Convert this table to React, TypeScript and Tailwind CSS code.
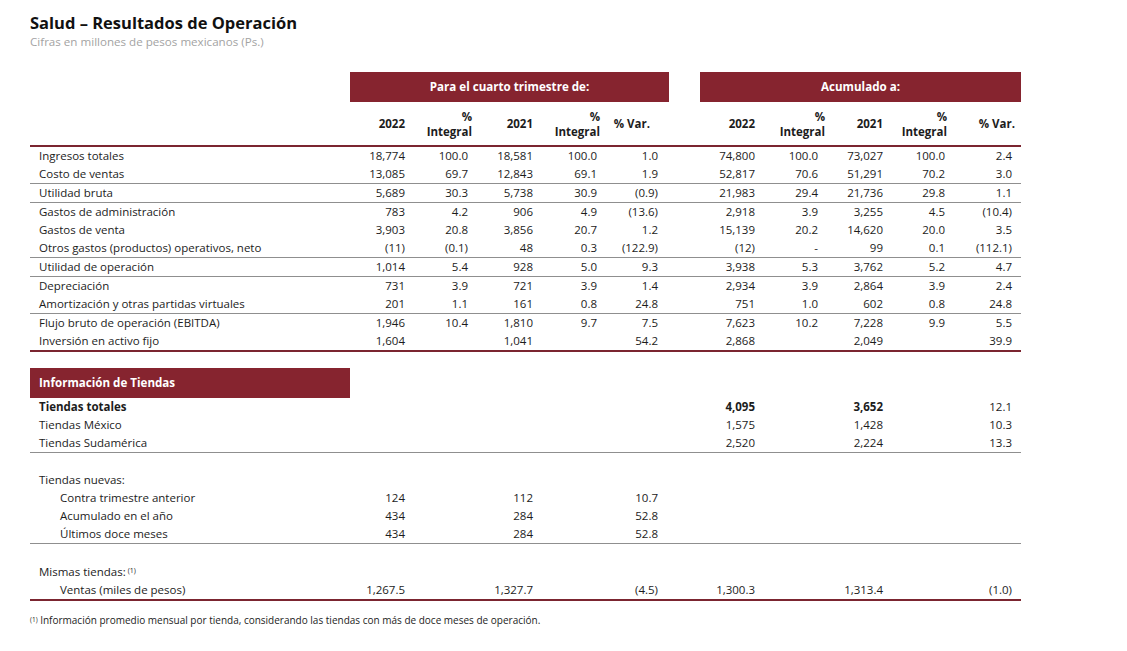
import React from "react";

const GRID =
  "grid grid-cols-[320px_55px_63px_65px_64px_61px_42px_55px_63px_65px_62px_67px_9px]";

type V = string | undefined;

function Row({
  label,
  vals,
  bold,
  boldIdx = [],
  indent,
}: {
  label: React.ReactNode;
  vals: V[];
  bold?: boolean;
  boldIdx?: number[];
  indent?: boolean;
}) {
  const v = [...vals];
  while (v.length < 10) v.push(undefined);
  const cell = (x: V, i: number) => (
    <div key={i} className={`text-right whitespace-nowrap ${boldIdx.includes(i) ? "font-bold" : ""}`}>
      {x ?? ""}
    </div>
  );
  return (
    <div className={`${GRID} h-[18px] items-center leading-[18px]`}>
      <div className={`${indent ? "pl-[30px]" : "pl-[9px]"} whitespace-nowrap ${bold ? "font-bold" : ""}`}>
        {label}
      </div>
      {v.slice(0, 5).map((x, i) => cell(x, i))}
      <div />
      {v.slice(5, 10).map((x, i) => cell(x, i + 5))}
      <div />
    </div>
  );
}

const Line = () => <div className="h-px bg-[#8f8f8f]" />;
const Thick = () => <div className="h-[2px] bg-[#7b2530]" />;

function HeadCell({ top, bottom, className = "" }: { top?: string; bottom: string; className?: string }) {
  return (
    <div className={`flex flex-col items-end justify-center text-right leading-[15px] ${className}`}>
      {top && <div>{top}</div>}
      <div>{bottom}</div>
    </div>
  );
}

export default function App() {
  return (
    <div
      className="w-[1127px] h-[651px] bg-white text-[#1c1c1c] overflow-hidden"
      style={{ fontFamily: '"Open Sans", "Noto Sans", sans-serif' }}
    >
      <div className="pl-[30px] w-[1021px]">
        <div className="pt-[11px] text-[16.5px] font-bold leading-[23px] text-[#111]">
          Salud – Resultados de Operación
        </div>
        <div className="text-[11.6px] leading-[16px] text-[#a3a3a3]">
          Cifras en millones de pesos mexicanos (Ps.)
        </div>

        <div className="mt-[22px] flex">
          <div className="ml-[320px] w-[319px] h-[30px] bg-[#86242f] text-white font-bold text-[11.6px] flex items-center justify-center">
            Para el cuarto trimestre de:
          </div>
          <div className="ml-[31px] w-[321px] h-[30px] bg-[#86242f] text-white font-bold text-[11.6px] flex items-center justify-center">
            Acumulado a:
          </div>
        </div>

        <div className={`${GRID} h-[43px] font-bold text-[11.5px]`}>
          <div />
          <HeadCell bottom="2022" />
          <HeadCell top="%" bottom="Integral" className="mr-[-4px]" />
          <HeadCell bottom="2021" />
          <HeadCell top="%" bottom="Integral" className="mr-[-3px]" />
          <HeadCell bottom="% Var." className="pr-[8px]" />
          <div />
          <HeadCell bottom="2022" />
          <HeadCell top="%" bottom="Integral" className="mr-[-7px]" />
          <HeadCell bottom="2021" />
          <HeadCell top="%" bottom="Integral" className="mr-[-2px]" />
          <HeadCell bottom="% Var." className="mr-[-3px]" />
          <div />
        </div>
        <Thick />

        <div className="text-[11.5px]">
          <Row label="Ingresos totales" vals={["18,774", "100.0", "18,581", "100.0", "1.0", "74,800", "100.0", "73,027", "100.0", "2.4"]} />
          <Row label="Costo de ventas" vals={["13,085", "69.7", "12,843", "69.1", "1.9", "52,817", "70.6", "51,291", "70.2", "3.0"]} />
          <Line />
          <Row label="Utilidad bruta" vals={["5,689", "30.3", "5,738", "30.9", "(0.9)", "21,983", "29.4", "21,736", "29.8", "1.1"]} />
          <Line />
          <Row label="Gastos de administración" vals={["783", "4.2", "906", "4.9", "(13.6)", "2,918", "3.9", "3,255", "4.5", "(10.4)"]} />
          <Row label="Gastos de venta" vals={["3,903", "20.8", "3,856", "20.7", "1.2", "15,139", "20.2", "14,620", "20.0", "3.5"]} />
          <Row label="Otros gastos (productos) operativos, neto" vals={["(11)", "(0.1)", "48", "0.3", "(122.9)", "(12)", "-", "99", "0.1", "(112.1)"]} />
          <Line />
          <Row label="Utilidad de operación" vals={["1,014", "5.4", "928", "5.0", "9.3", "3,938", "5.3", "3,762", "5.2", "4.7"]} />
          <Line />
          <Row label="Depreciación" vals={["731", "3.9", "721", "3.9", "1.4", "2,934", "3.9", "2,864", "3.9", "2.4"]} />
          <Row label="Amortización y otras partidas virtuales" vals={["201", "1.1", "161", "0.8", "24.8", "751", "1.0", "602", "0.8", "24.8"]} />
          <Line />
          <Row label="Flujo bruto de operación (EBITDA)" vals={["1,946", "10.4", "1,810", "9.7", "7.5", "7,623", "10.2", "7,228", "9.9", "5.5"]} />
          <Row label="Inversión en activo fijo" vals={["1,604", undefined, "1,041", undefined, "54.2", "2,868", undefined, "2,049", undefined, "39.9"]} />
        </div>
        <Thick />

        <div className="mt-[16px] w-[320px] h-[30px] bg-[#86242f] text-white font-bold text-[11.6px] flex items-center pl-[9px]">
          Información de Tiendas
        </div>

        <div className="text-[11.5px]">
          <Row bold boldIdx={[5, 7]} label="Tiendas totales" vals={[, , , , , "4,095", , "3,652", , "12.1"]} />
          <Row label="Tiendas México" vals={[, , , , , "1,575", , "1,428", , "10.3"]} />
          <Row label="Tiendas Sudamérica" vals={[, , , , , "2,520", , "2,224", , "13.3"]} />
          <Line />

          <div className="mt-[18px]" />
          <Row label="Tiendas nuevas:" vals={[]} />
          <Row indent label="Contra trimestre anterior" vals={["124", , "112", , "10.7"]} />
          <Row indent label="Acumulado en el año" vals={["434", , "284", , "52.8"]} />
          <Row indent label="Últimos doce meses" vals={["434", , "284", , "52.8"]} />
          <Line />

          <div className="mt-[19px]" />
          <Row
            label={
              <span>
                Mismas tiendas:<sup className="text-[7px] ml-[2px] relative top-[-3px]">(1)</sup>
              </span>
            }
            vals={[]}
          />
          <Row indent label="Ventas (miles de pesos)" vals={["1,267.5", , "1,327.7", , "(4.5)", "1,300.3", , "1,313.4", , "(1.0)"]} />
        </div>
        <Thick />

        <div className="mt-[10px] h-[18px] leading-[18px] text-[10px] whitespace-nowrap">
          <sup className="text-[6.5px] relative top-[-2px]">(1)</sup> Información promedio mensual por tienda, considerando las tiendas con más de doce meses de operación.
        </div>
      </div>
    </div>
  );
}
